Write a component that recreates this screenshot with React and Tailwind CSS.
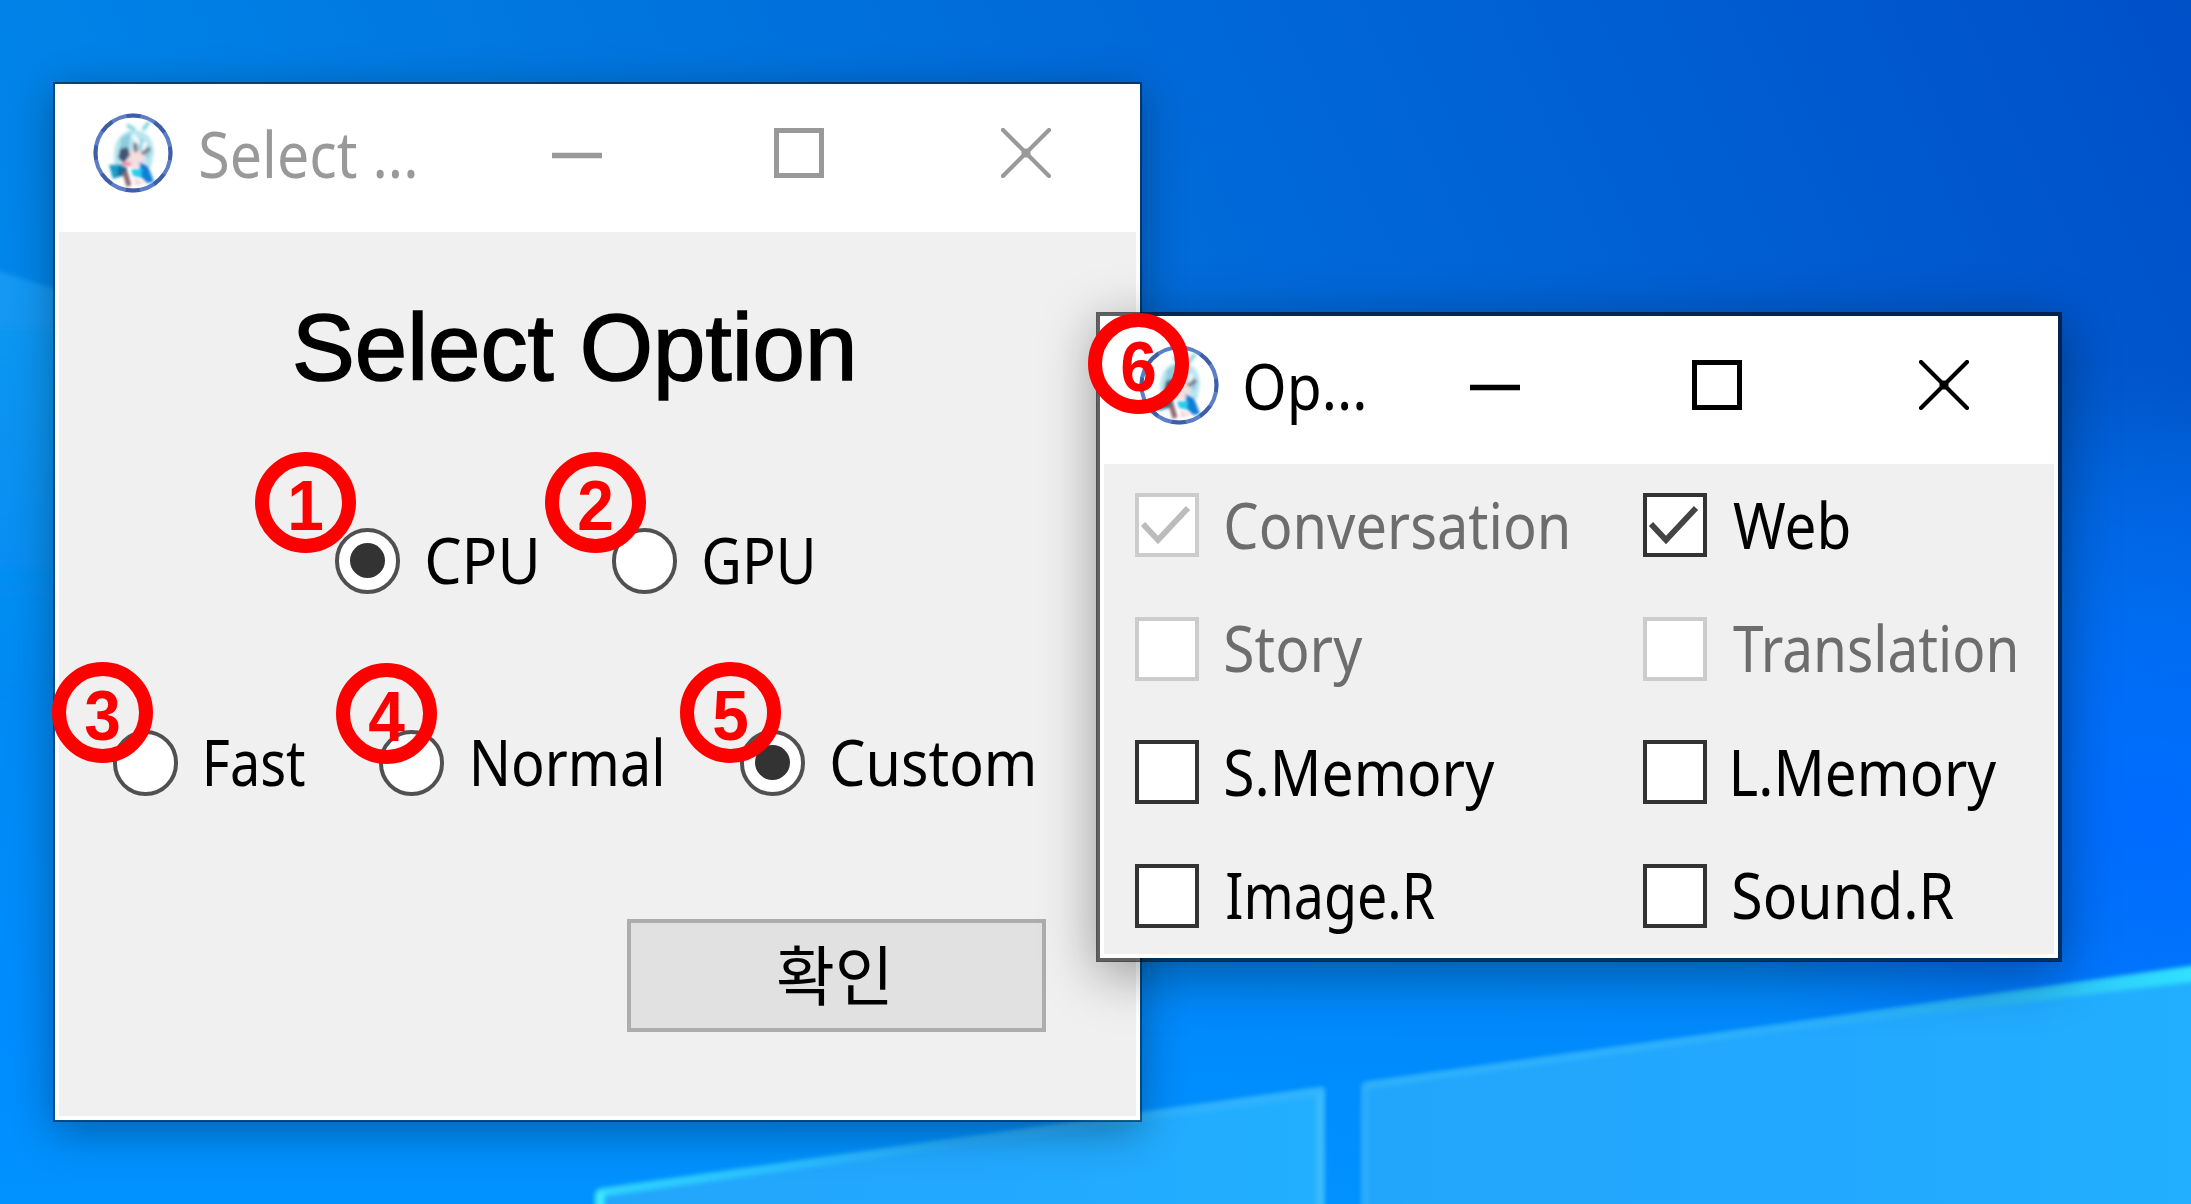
import { useLayoutEffect, useState } from "react";

/* Text whose inked extent is fitted to a given width. */
function Label({ text, width, size = 63, font = '"Noto Sans"', dy = 0, className = "" }) {
  const [fit, setFit] = useState({ scale: 1, shift: 0 });
  useLayoutEffect(() => {
    const ctx = document.createElement("canvas").getContext("2d");
    ctx.font = `${size}px ${font}, sans-serif`;
    const m = ctx.measureText(text);
    const ink = width - 4;
    const scale = ink / (m.actualBoundingBoxLeft + m.actualBoundingBoxRight);
    setFit({ scale, shift: m.actualBoundingBoxLeft * scale + 2 });
  }, [text, width, size, font]);
  return (
    <span className={`block shrink-0 whitespace-nowrap leading-none ${className}`} style={{ width }}>
      <span
        className="inline-block origin-left"
        style={{
          fontSize: size,
          fontFamily: `${font}, sans-serif`,
          transform: `translate(${fit.shift}px, ${dy}px) scaleX(${fit.scale})`,
        }}
      >
        {text}
      </span>
    </span>
  );
}

function Wallpaper() {
  return (
    <svg className="absolute inset-0 h-full w-full" viewBox="0 0 2191 1204" preserveAspectRatio="none" aria-hidden="true">
      <defs>
        <linearGradient id="sky" x1="0" y1="0.25" x2="1" y2="0">
          <stop offset="0" stopColor="#0086ea" />
          <stop offset="0.3" stopColor="#0076de" />
          <stop offset="0.65" stopColor="#0064d6" />
          <stop offset="1" stopColor="#0050c8" />
        </linearGradient>
        <linearGradient id="low" x1="0" y1="0" x2="0" y2="1">
          <stop offset="0.3" stopColor="#0090ff" stopOpacity="0" />
          <stop offset="0.85" stopColor="#008cff" stopOpacity="0.92" />
          <stop offset="1" stopColor="#0092ff" />
        </linearGradient>
        <radialGradient id="glow" cx="2150" cy="820" r="420" gradientUnits="userSpaceOnUse">
          <stop offset="0" stopColor="#006bff" />
          <stop offset="1" stopColor="#006bff" stopOpacity="0" />
        </radialGradient>
        <linearGradient id="pane" x1="0" y1="0" x2="1" y2="0">
          <stop offset="0" stopColor="#20a6fb" />
          <stop offset="0.5" stopColor="#22a8ff" />
          <stop offset="1" stopColor="#24afff" />
        </linearGradient>
        <linearGradient id="edgeL" x1="0" y1="0" x2="1" y2="0">
          <stop offset="0" stopColor="#30d8ff" />
          <stop offset="0.5" stopColor="#27acff" />
          <stop offset="1" stopColor="#34b4ff" />
        </linearGradient>
        <linearGradient id="edgeR" x1="0" y1="0" x2="1" y2="0">
          <stop offset="0" stopColor="#2eb0ff" />
          <stop offset="0.5" stopColor="#2ab4f4" />
          <stop offset="1" stopColor="#30e4ff" />
        </linearGradient>
        <linearGradient id="ray" x1="0" y1="0" x2="0" y2="1">
          <stop offset="0" stopColor="#18a0f8" stopOpacity="0.75" />
          <stop offset="1" stopColor="#18a0f8" stopOpacity="0" />
        </linearGradient>
        <filter id="soft"><feGaussianBlur stdDeviation="2.5" /></filter>
      </defs>
      <rect width="2191" height="1204" fill="url(#sky)" />
      <rect width="2191" height="1204" fill="url(#low)" />
      <rect width="2191" height="1204" fill="url(#glow)" />
      <path d="M-10 268L64 292V700H-10Z" fill="url(#ray)" filter="url(#soft)" />
      <g filter="url(#soft)">
        <path d="M596 1191L1324 1088V1220H596Z" fill="url(#pane)" />
        <path d="M1362 1083L2210 965V1220H1362Z" fill="url(#pane)" />
      </g>
      <g fill="none" filter="url(#soft)">
        <path d="M598 1193L1324 1091" stroke="url(#edgeL)" strokeWidth="8" />
        <path d="M600 1192V1210" stroke="#3cecff" strokeWidth="9" />
        <path d="M1320 1094V1210" stroke="#3cbcff" strokeWidth="7" />
        <path d="M1365 1086V1210" stroke="#30aeff" strokeWidth="5" />
        <path d="M1364 1086L1780 1028" stroke="#30b2fc" strokeWidth="6" />
        <path d="M1760 1028L2200 965L2200 981L1760 1034Z" fill="url(#edgeR)" />
      </g>
    </svg>
  );
}

function AppIcon() {
  return (
    <svg className="h-20 w-20 shrink-0" viewBox="0 0 80 80" aria-hidden="true">
      <defs>
        <filter id="iconSoft" x="-20%" y="-20%" width="140%" height="140%"><feGaussianBlur stdDeviation="1.5" /></filter>
      </defs>
      <circle cx="40" cy="40" r="37.5" fill="#fff" stroke="#5b7ec6" strokeWidth="4" />
      <circle cx="40" cy="40" r="37.5" fill="none" stroke="#2b4a94" strokeWidth="4" strokeDasharray="14 15.5" strokeDashoffset="7" opacity=".6" />
      <g filter="url(#iconSoft)">
        <path d="M21 46Q20 20 40 17Q60 17 61 40L58 55L46 46L30 48L22 56Z" fill="#b9e6f0" />
        <path d="M28 25L38 19L36 33L26 42ZM48 24L58 38L55 46L46 36Z" fill="#8fcbdc" />
        <path d="M34 12L42 17M50 17L56 9" stroke="#8ed9df" strokeWidth="4" />
        <path d="M40 22L46 31M52 29L50 43" stroke="#f2fcff" strokeWidth="4" />
        <path d="M33 40L44 34L52 45L45 55L34 54Z" fill="#f4dede" />
        <path d="M27 36L35 34L37 42L31 50L25 45Z" fill="#3c5576" />
        <path d="M42 30L43 39M49 41L57 35" stroke="#7b7486" strokeWidth="4" />
        <path d="M29 49H38V53H30Z" fill="#f58ca8" />
        <path d="M16 52L30 51L32 62L20 66Z" fill="#159bc9" />
        <path d="M25 54H34V63H25Z" fill="#17698d" />
        <path d="M47 49L55 53L61 69L54 70L46 62Z" fill="#0b7fd6" />
        <path d="M38 56H49L48 65L40 63Z" fill="#28cfee" />
        <path d="M32 59L36 73" stroke="#8c6370" strokeWidth="5" />
        <path d="M41 65L52 70L42 73Z" fill="#f5d9d6" />
      </g>
    </svg>
  );
}

function Controls({ color, className }) {
  return (
    <div className={`flex shrink-0 items-center gap-[172px] ${color} ${className}`}>
      <svg className="h-[50px] w-[50px]" viewBox="0 0 50 50" stroke="currentColor" strokeWidth="5.5"><path d="M0 27.5H50" /></svg>
      <svg className="h-[50px] w-[50px]" viewBox="0 0 50 50" fill="none" stroke="currentColor" strokeWidth="5"><rect x="2.5" y="2.5" width="45" height="45" /></svg>
      <svg className="ml-[5px] h-[50px] w-[50px]" viewBox="0 0 50 50" stroke="currentColor" strokeWidth="4.2" strokeLinecap="round"><path d="M2 2L48 48M48 2L2 48" /><circle cx="25" cy="25" r="2.5" fill="currentColor" /></svg>
    </div>
  );
}

function Radio({ checked, label, width, gap }) {
  return (
    <div className={`flex items-center ${gap}`}>
      <span className="flex h-[66px] w-[65px] shrink-0 items-center justify-center rounded-full border-[4px] border-[#505050] bg-white">
        {checked && <span className="h-[35px] w-[35px] rounded-full bg-[#333]" />}
      </span>
      <Label text={label} width={width} dy={-1} />
    </div>
  );
}

function Check({ checked, disabled, label, width, inset = "ml-[25px]" }) {
  return (
    <div className={`flex h-16 items-center ${disabled ? "text-[#6d6d6d]" : "text-black"}`}>
      <span className={`h-16 w-16 shrink-0 border-[4.5px] bg-white ${disabled ? "border-[#ccc] text-[#bcbcbc]" : "border-[#333] text-[#444]"}`}>
        {checked && (
          <svg className="h-full w-full" viewBox="0 0 56 56" fill="none" stroke="currentColor" strokeWidth="5.8"><path d="M4 27L19 43L49 11" /></svg>
        )}
      </span>
      <Label text={label} width={width} dy={-1} className={inset} />
    </div>
  );
}

function Badge({ n, place }) {
  return (
    <div className={`absolute flex h-[101px] w-[101px] items-center justify-center rounded-full border-[14px] border-[#f00] pt-[7px] font-['Liberation_Sans',sans-serif] text-[70px] leading-none font-bold text-[#f00] ${place}`}>
      <span className="inline-block scale-x-[0.94]">{n}</span>
    </div>
  );
}

export default function App() {
  return (
    <main className="relative h-[1204px] w-[2191px] overflow-hidden bg-[#0078e0]">
      <Wallpaper />

      <section className="absolute top-[82px] left-[53px] flex h-[1040px] w-[1089px] flex-col border-2 border-black/45 bg-white bg-clip-padding shadow-[0_10px_40px_rgba(0,0,0,0.32)]">
        <header className="flex h-[148px] shrink-0 items-center pb-[11px] pl-[38px]">
          <AppIcon />
          <Label text="Select ..." width={218} dy={1} className="ml-[26px] text-[#999]" />
          <Controls color="text-[#999]" className="ml-[135px]" />
        </header>
        <div className="mx-1 mb-1 flex grow flex-col bg-[#f0f0f0] pt-[60px]">
          <div className="flex h-[110px] items-center pl-[235px] text-black [-webkit-text-stroke:1.6px_black]">
            <Label text="Select Option" width={560} size={94} dy={1} font='"Liberation Sans"' />
          </div>
          <div className="mt-[125.5px] flex gap-[74px] pl-[276px]">
            <Radio checked label="CPU" width={113} gap="gap-[25px]" />
            <Radio label="GPU" width={112} gap="gap-[25px]" />
          </div>
          <div className="mt-[136px] flex pl-[54px]">
            <Radio label="Fast" width={102} gap="gap-[27px]" />
            <div className="ml-[72px]"><Radio label="Normal" width={191} gap="gap-[28px]" /></div>
            <div className="ml-[77px]"><Radio checked label="Custom" width={205} gap="gap-[25px]" /></div>
          </div>
          <button className="mt-[123px] ml-[568px] flex h-[113px] w-[419px] items-center justify-center border-[4.5px] border-[#adadad] bg-[#e1e1e1] pr-[7px] text-black">
            <Label text="확인" width={114} size={65} font='"Noto Sans CJK KR"' dy={-3} />
          </button>
        </div>
      </section>

      <section className="absolute top-[312px] left-[1096px] flex h-[650px] w-[966px] flex-col border-[4px] border-black/60 bg-white bg-clip-padding shadow-[0_12px_50px_rgba(0,0,0,0.36)]">
        <header className="flex h-[148px] shrink-0 items-center pb-[11px] pl-[39px]">
          <AppIcon />
          <Label text="Op..." width={123} dy={1} className="ml-[24px] text-black" />
          <Controls color="text-black" className="ml-[104px]" />
        </header>
        <div className="mx-1 mb-1 grid grow auto-rows-min grid-cols-[508px_1fr] gap-y-[59.5px] bg-[#f0f0f0] pt-[29px] pl-[31px]">
          <Check checked disabled label="Conversation" width={345} />
          <Check checked label="Web" width={120} inset="ml-[24px]" />
          <Check disabled label="Story" width={141} />
          <Check disabled label="Translation" width={286} inset="ml-[24px]" />
          <Check label="S.Memory" width={273} />
          <Check label="L.Memory" width={267} inset="ml-[25px]" />
          <Check label="Image.R" width={212} inset="ml-[26px]" />
          <Check label="Sound.R" width={224} inset="ml-[25px]" />
        </div>
      </section>

      <Badge n="1" place="top-[452px] left-[255px]" />
      <Badge n="2" place="top-[452px] left-[545px]" />
      <Badge n="3" place="top-[662px] left-[52px]" />
      <Badge n="4" place="top-[663px] left-[336px]" />
      <Badge n="5" place="top-[662px] left-[680px]" />
      <Badge n="6" place="top-[313px] left-[1088px]" />
    </main>
  );
}
